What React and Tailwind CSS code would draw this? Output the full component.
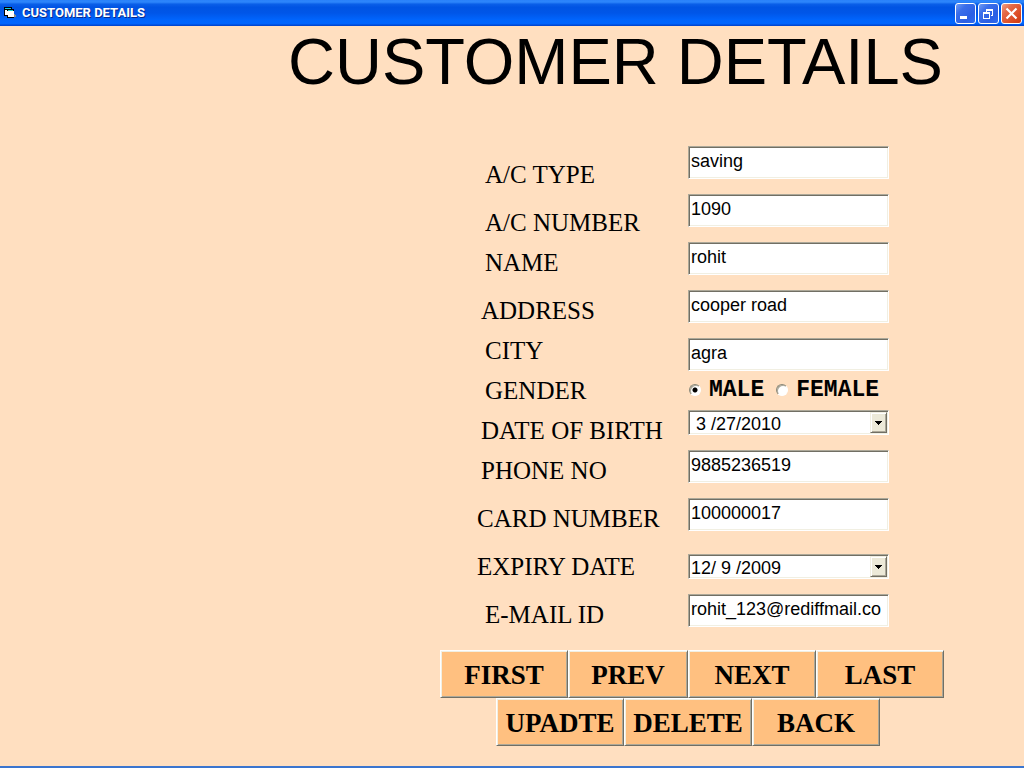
import React from "react";

const bevel =
  "w-full border border-t-[#aca899] border-l-[#aca899] border-r-white border-b-white bg-white text-lg text-black shadow-[inset_1px_1px_0_#716f64,inset_-1px_-1px_0_#f1efe2]";

const actionClass =
  "h-12 border border-t-white border-l-white border-r-[#716f64] border-b-[#716f64] bg-[#ffc080] pt-0.5 font-['Liberation_Serif',serif] text-[27px] font-bold text-black shadow-[inset_1px_1px_0_#f1efe2,inset_-1px_-1px_0_#aca899]";

function Row({ id, label, className, labelClass, children }) {
  return (
    <div className={`flex items-start ${className}`}>
      <div className={`w-[211px] shrink-0 ${labelClass}`}>
        <label
          htmlFor={id}
          className="block whitespace-nowrap font-['Liberation_Serif',serif] text-[25px] leading-[26px]"
        >
          {label}
        </label>
      </div>
      <div className="w-[201px]">{children}</div>
    </div>
  );
}

function TextField({ id, value }) {
  return (
    <input
      id={id}
      type="text"
      defaultValue={value}
      className={`${bevel} block h-[33px] px-0.5 pb-0.5 outline-none`}
    />
  );
}

function DateField({ id, value, inputClass }) {
  return (
    <div className={`${bevel} flex h-[25px] p-px`}>
      <input
        id={id}
        type="text"
        defaultValue={value}
        className={`min-w-0 flex-1 bg-transparent pt-0.5 outline-none ${inputClass}`}
      />
      <button
        type="button"
        aria-label="Open calendar"
        className="flex w-[17px] items-center justify-center border border-t-[#f1efe2] border-l-[#f1efe2] border-r-[#716f64] border-b-[#716f64] bg-[#ece9d8] shadow-[inset_1px_1px_0_#ffffff,inset_-1px_-1px_0_#aca899]"
      >
        <svg width="7" height="4" viewBox="0 0 7 4" shapeRendering="crispEdges">
          <path d="M0 0h7v1H6v1H5v1H4v1H3V3H2V2H1V1H0z" fill="#000" />
        </svg>
      </button>
    </div>
  );
}

function Radio({ label, checked }) {
  return (
    <label className="flex items-center gap-2 font-['Liberation_Mono',monospace] text-[23px] leading-6 font-bold">
      <input
        type="radio"
        name="gender"
        defaultChecked={checked}
        className="size-3 shrink-0 appearance-none rounded-full border border-t-[#8a8777] border-l-[#8a8777] border-r-white border-b-white bg-white shadow-[inset_1px_1px_0_#aca899] checked:bg-[radial-gradient(circle,#000_2px,#fff_3px)]"
      />
      {label}
    </label>
  );
}

function WindowButton({ label, className, children }) {
  return (
    <button
      type="button"
      aria-label={label}
      className={`flex size-[21px] items-center justify-center rounded-[3px] border border-white ${className}`}
    >
      <svg width="19" height="19" viewBox="0 0 19 19" fill="none">
        {children}
      </svg>
    </button>
  );
}

const blueButton =
  "bg-[linear-gradient(135deg,#6f9cf5_0%,#3a6eea_30%,#2c5fe4_70%,#2f6cf0_100%)]";
const redButton =
  "bg-[linear-gradient(135deg,#f0a088_0%,#e56a48_30%,#dc4c24_70%,#cc3a12_100%)]";

export default function App() {
  return (
    <div className="flex min-h-screen flex-col border-b-2 border-[#3a75cf] bg-[#ffdfc0] font-['Liberation_Sans',sans-serif] text-black">
      <header className="flex h-[26px] items-center gap-1.5 bg-[linear-gradient(to_bottom,#2a82fa_0%,#2d86fb_8%,#0a5fe8_16%,#0054e3_28%,#0056e8_50%,#0064fc_75%,#0066ff_90%,#0040c8_100%)] pr-0.5 pl-1">
        <svg width="12" height="12" viewBox="0 0 12 12" shapeRendering="crispEdges">
          <path d="M0 0h8v2h2v9H3V9H0z" fill="#000" />
          <path d="M1 1h6v1H1zM4 3h5v1H4z" fill="#19d3dc" />
          <path d="M1 3h2v5H1zM3 4h7v6H4V8H3z" fill="#fff" />
          <path d="M10 7h1v1h1v2h-2z" fill="#8b8b83" />
        </svg>
        <span className="flex-1 font-['Roboto',sans-serif] text-[13px] font-bold text-white [text-shadow:1px_1px_0_#0a2a8c]">
          CUSTOMER DETAILS
        </span>
        <div className="flex gap-0.5">
          <WindowButton label="Minimize" className={blueButton}>
            <path d="M4 12h7v3H4z" fill="#fff" />
          </WindowButton>
          <WindowButton label="Restore" className={blueButton}>
            <path d="M7 5h7v7h-2v-1h1V7H8v1H7z" fill="#fff" />
            <path d="M4 8h7v7H4zM5 10v4h5v-4z" fill="#fff" fillRule="evenodd" />
          </WindowButton>
          <WindowButton label="Close" className={redButton}>
            <path d="M4.5 4.5l10 10M14.5 4.5l-10 10" stroke="#fff" strokeWidth="2.2" />
          </WindowButton>
        </div>
      </header>

      <main className="flex-1">
        <h1 className="pl-72 text-[65px] leading-[72px] whitespace-nowrap">CUSTOMER DETAILS</h1>

        <form className="mt-12 pl-[440px]">
          <div className="pl-[37px]">
            <Row id="type" label="A/C TYPE" className="h-12" labelClass="pl-2 pt-4" >
              <TextField id="type" value="saving" />
            </Row>
            <Row id="number" label="A/C NUMBER" className="h-12" labelClass="pl-2 pt-4">
              <TextField id="number" value="1090" />
            </Row>
            <Row id="name" label="NAME" className="h-12" labelClass="pl-2 pt-2">
              <TextField id="name" value="rohit" />
            </Row>
            <Row id="address" label="ADDRESS" className="h-12" labelClass="pl-1 pt-2">
              <TextField id="address" value="cooper road" />
            </Row>
            <Row id="city" label="CITY" className="h-10" labelClass="pl-2">
              <TextField id="city" value="agra" />
            </Row>
            <div role="radiogroup" aria-labelledby="gender" className="flex h-8 items-start">
              <div className="w-[211px] shrink-0 pl-2">
                <span
                  id="gender"
                  className="block font-['Liberation_Serif',serif] text-[25px] leading-[26px]"
                >
                  GENDER
                </span>
              </div>
              <div className="flex gap-3 pl-px">
                <Radio label="MALE" checked />
                <Radio label="FEMALE" />
              </div>
            </div>
            <Row id="birth" label="DATE OF BIRTH" className="h-10" labelClass="pl-1 pt-2">
              <DateField id="birth" value="3 /27/2010" inputClass="pl-1.5" />
            </Row>
            <Row id="phone" label="PHONE NO" className="h-12" labelClass="pl-1 pt-2">
              <TextField id="phone" value="9885236519" />
            </Row>
            <Row id="card" label="CARD NUMBER" className="h-12" labelClass="pt-2">
              <TextField id="card" value="100000017" />
            </Row>
            <Row id="expiry" label="EXPIRY DATE" className="h-12" labelClass="pt-2">
              <div className="pt-2">
                <DateField id="expiry" value="12/ 9 /2009" inputClass="pl-px" />
              </div>
            </Row>
            <Row id="email" label="E-MAIL ID" className="h-12" labelClass="pl-2 pt-2">
              <TextField id="email" value="rohit_123@rediffmail.co" />
            </Row>
          </div>

          <div className="flex pt-2">
            <button type="button" className={`${actionClass} w-32`}>FIRST</button>
            <button type="button" className={`${actionClass} w-30`}>PREV</button>
            <button type="button" className={`${actionClass} w-32`}>NEXT</button>
            <button type="button" className={`${actionClass} w-32`}>LAST</button>
          </div>
          <div className="flex pl-14">
            <button type="button" className={`${actionClass} w-32`}>UPADTE</button>
            <button type="button" className={`${actionClass} w-32`}>DELETE</button>
            <button type="button" className={`${actionClass} w-32`}>BACK</button>
          </div>
        </form>
      </main>
    </div>
  );
}
